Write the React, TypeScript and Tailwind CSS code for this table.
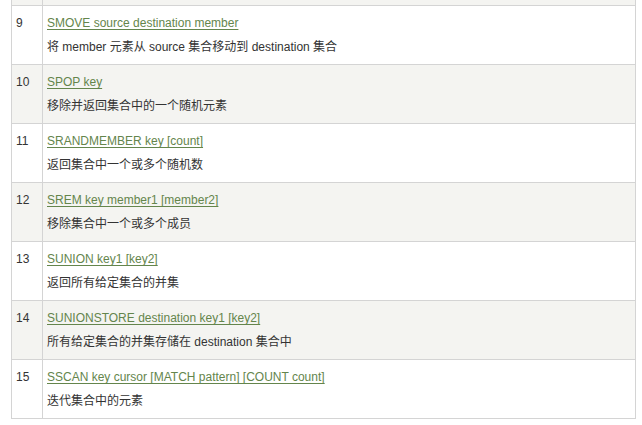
import React from "react";

const rows = [
  { n: "9", cmd: "SMOVE source destination member", desc: "将 member 元素从 source 集合移动到 destination 集合" },
  { n: "10", cmd: "SPOP key", desc: "移除并返回集合中的一个随机元素" },
  { n: "11", cmd: "SRANDMEMBER key [count]", desc: "返回集合中一个或多个随机数" },
  { n: "12", cmd: "SREM key member1 [member2]", desc: "移除集合中一个或多个成员" },
  { n: "13", cmd: "SUNION key1 [key2]", desc: "返回所有给定集合的并集" },
  { n: "14", cmd: "SUNIONSTORE destination key1 [key2]", desc: "所有给定集合的并集存储在 destination 集合中" },
  { n: "15", cmd: "SSCAN key cursor [MATCH pattern] [COUNT count]", desc: "迭代集合中的元素" },
];

export default function App() {
  return (
    <div
      className="w-[642px] h-[425px] bg-white overflow-hidden pl-[11px] text-[12px] text-[#333]"
      style={{ fontFamily: '"Liberation Sans", Arial, "Noto Sans CJK SC", sans-serif' }}
    >
      <div className="w-[625px] border-x border-b border-[#d4d4d4]">
        <div className="grid grid-cols-[31px_1fr] h-[5px] bg-[#f4f4f1]">
          <div className="border-r border-[#d4d4d4]" />
          <div />
        </div>
        {rows.map((r, i) => (
          <div
            key={r.n}
            className={`grid grid-cols-[31px_1fr] border-t border-[#d4d4d4] ${i % 2 === 1 ? "bg-[#f4f4f1]" : "bg-white"}`}
          >
            <div className="border-r border-[#d4d4d4] pl-[4px] py-[5px] leading-[24px]">{r.n}</div>
            <div className="pl-[4px] py-[5px] leading-[24px]">
              <div>
                <a className="text-[#64854c] underline underline-offset-2" href="#">
                  {r.cmd}
                </a>
              </div>
              <div>{r.desc}</div>
            </div>
          </div>
        ))}
      </div>
    </div>
  );
}
